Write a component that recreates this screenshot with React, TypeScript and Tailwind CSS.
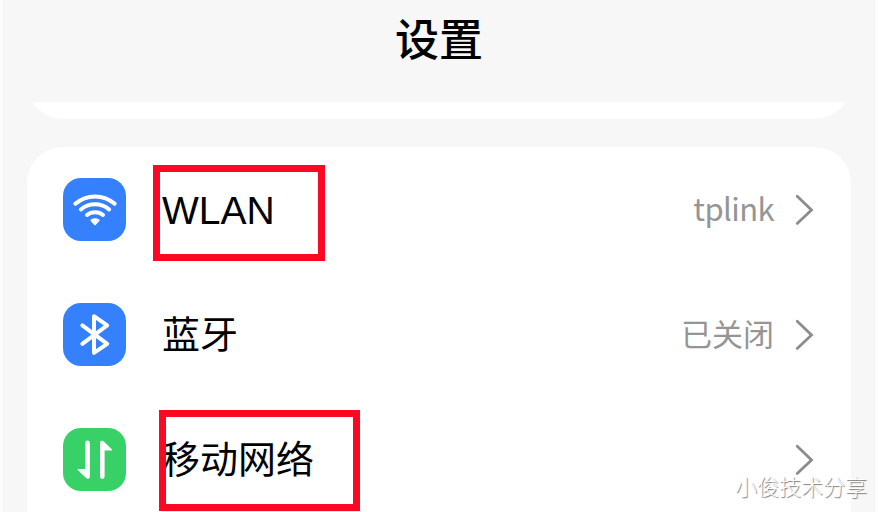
import type { ReactNode } from "react";

function WifiIcon() {
  return (
    <svg viewBox="0 0 63 63" className="h-full w-full" fill="none" stroke="white" strokeWidth="4" strokeLinecap="round">
      <path d="M12.3 25.8C23.5 15.9 40.5 15.9 51.7 25.8" />
      <path d="M17.9 31.4C25.6 24.5 38.4 24.5 46.1 31.4" />
      <path d="M24 37C28.2 33.2 35.8 33.2 40 37" />
      <path d="M28.4 42.4Q32 40.2 35.6 42.4L32 46.2Z" fill="white" strokeWidth="2" strokeLinejoin="round" />
    </svg>
  );
}

function BluetoothIcon() {
  return (
    <svg viewBox="0 0 63 63" className="h-full w-full" fill="none" stroke="white" strokeWidth="4" strokeLinecap="round" strokeLinejoin="round">
      <path d="M19.3 22.4L44.2 40.8L31 49.8V13.2L44.2 22.3L19.3 40.8" />
    </svg>
  );
}

function MobileDataIcon() {
  return (
    <svg viewBox="0 0 63 63" className="h-full w-full" fill="white">
      <path d="M22.3 14.9a2.3 2.3 0 0 1 4.6 0V48.6a2.2 2.2 0 0 1-3.8 1.5L14.6 41.9Q14.2 41 15.2 41H22.3Z" />
      <path d="M41.6 48.6a2.3 2.3 0 0 1-4.6 0V14.9a2.2 2.2 0 0 1 3.8-1.5L49 21.6Q49.4 22.5 48.4 22.5H41.6Z" />
    </svg>
  );
}

function Chevron() {
  return (
    <svg viewBox="0 0 20 32" className="h-8 w-5" fill="none" stroke="#8c8c8c" strokeWidth="2.8" strokeLinecap="round">
      <path d="M2.2 2.2L16.5 16L2.2 29.4" />
    </svg>
  );
}

type RowProps = {
  icon: ReactNode;
  color: string;
  label: ReactNode;
  value?: ReactNode;
  mark?: string;
};

function Row({ icon, color, label, value, mark }: RowProps) {
  return (
    <div className="relative flex h-[125px] items-center pr-9 pl-9">
      <div className={`h-[63px] w-[63px] shrink-0 rounded-[18px] ${color}`}>{icon}</div>
      <div className="ml-9 pb-[5px] text-[38px] leading-none text-black">{label}</div>
      <div className="mr-[21px] ml-auto pb-1 text-[31px] leading-none text-[#959595]">{value}</div>
      <Chevron />
      {mark && <div className={`absolute border-7 border-[#fb0822] ${mark}`} />}
    </div>
  );
}

export default function App() {
  return (
    <main className="relative h-[512px] w-[878px] overflow-hidden bg-[#fcfcfc] px-[3px] font-['Noto_Sans_CJK_SC',sans-serif]">
      <div className="h-full bg-[#f7f7f7] px-6">
        <header className="flex h-[102px] justify-center pt-[15px]">
          <h1 className="text-[44px] leading-none font-medium text-black">设置</h1>
        </header>

        {/* bottom edge of the card scrolled under the header */}
        <div className="flex h-[17px] flex-col justify-end overflow-hidden">
          <div className="h-20 shrink-0 rounded-[36px] bg-white" />
        </div>

        <section className="mt-7 h-[420px] w-[824px] rounded-[36px] bg-white">
          <Row
            icon={<WifiIcon />}
            color="bg-[#3580fc]"
            label={<p className="pt-[7px] font-['Liberation_Sans',sans-serif] text-[39px]">WLAN</p>}
            value={<span className="tracking-[-0.6px]">tplink</span>}
            mark="top-[18px] left-[126px] h-24 w-[172px]"
          />
          <Row icon={<BluetoothIcon />} color="bg-[#3580fc]" label="蓝牙" value="已关闭" />
          <Row
            icon={<MobileDataIcon />}
            color="bg-[#38d167]"
            label="移动网络"
            mark="top-[13px] left-[132px] h-[101px] w-[201px]"
          />
        </section>
      </div>

      <p className="absolute right-[11px] bottom-[16px] text-[22px] leading-none font-light text-white [text-shadow:1px_1px_1px_#777]">
        小俊技术分享
      </p>
    </main>
  );
}
